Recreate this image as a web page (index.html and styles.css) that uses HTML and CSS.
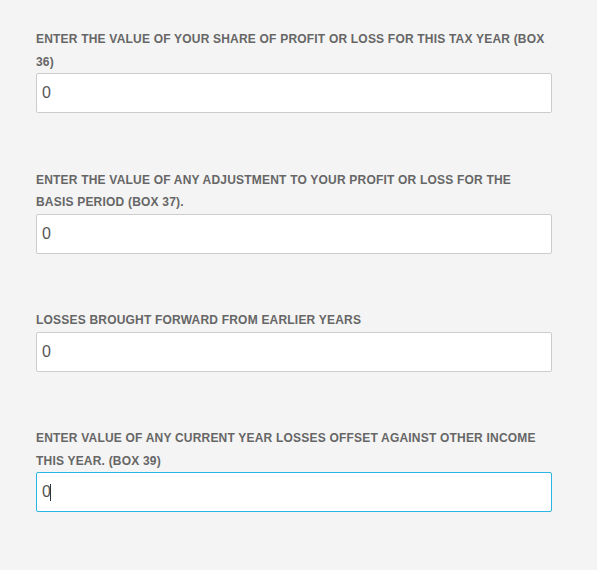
FILE: index.html
```html
<!DOCTYPE html>
<html>
<head>
<meta charset="utf-8">
<link rel="stylesheet" href="styles.css">
</head>
<body>
<form class="form">
  <div class="field">
    <label class="label">Enter the value of your share of profit or loss for this tax year (Box 36)</label>
    <input class="input" type="text" value="0">
  </div>
  <div class="field">
    <label class="label">Enter the value of any adjustment to your profit or loss for the basis period (Box 37).</label>
    <input class="input" type="text" value="0">
  </div>
  <div class="field">
    <label class="label">Losses brought forward from earlier years</label>
    <input class="input" type="text" value="0">
  </div>
  <div class="field">
    <label class="label">Enter value of any current year losses offset against other income this year. (Box 39)</label>
    <div class="input-wrap">
      <input class="input input-focus" type="text" value="0">
      <span class="caret"></span>
    </div>
  </div>
</form>
</body>
</html>
```
FILE: styles.css
```css
html, body {
  margin: 0;
  padding: 0;
  background: #f4f4f4;
}
body {
  font-family: "Liberation Sans", Arial, sans-serif;
}
.form {
  width: 516px;
  padding: 28px 0 0 36px;
  display: flex;
  flex-direction: column;
  gap: 55.5px;
}
.field {
  display: flex;
  flex-direction: column;
}
.label {
  display: block;
  font-size: 12px;
  font-weight: bold;
  line-height: 22.5px;
  letter-spacing: 0.2px;
  text-transform: uppercase;
  color: #666666;
}
.input {
  box-sizing: border-box;
  width: 516px;
  height: 40px;
  margin: 0;
  padding: 0 5px;
  border: 1px solid #cccccc;
  border-radius: 2px;
  background: #ffffff;
  font-family: "Liberation Sans", Arial, sans-serif;
  font-size: 16px;
  color: #555555;
  outline: none;
}
.input-wrap {
  position: relative;
}
.input-focus {
  border-color: #29b6e6;
}
.caret {
  position: absolute;
  left: 14px;
  top: 12px;
  width: 1px;
  height: 17px;
  background: #333333;
}
```
